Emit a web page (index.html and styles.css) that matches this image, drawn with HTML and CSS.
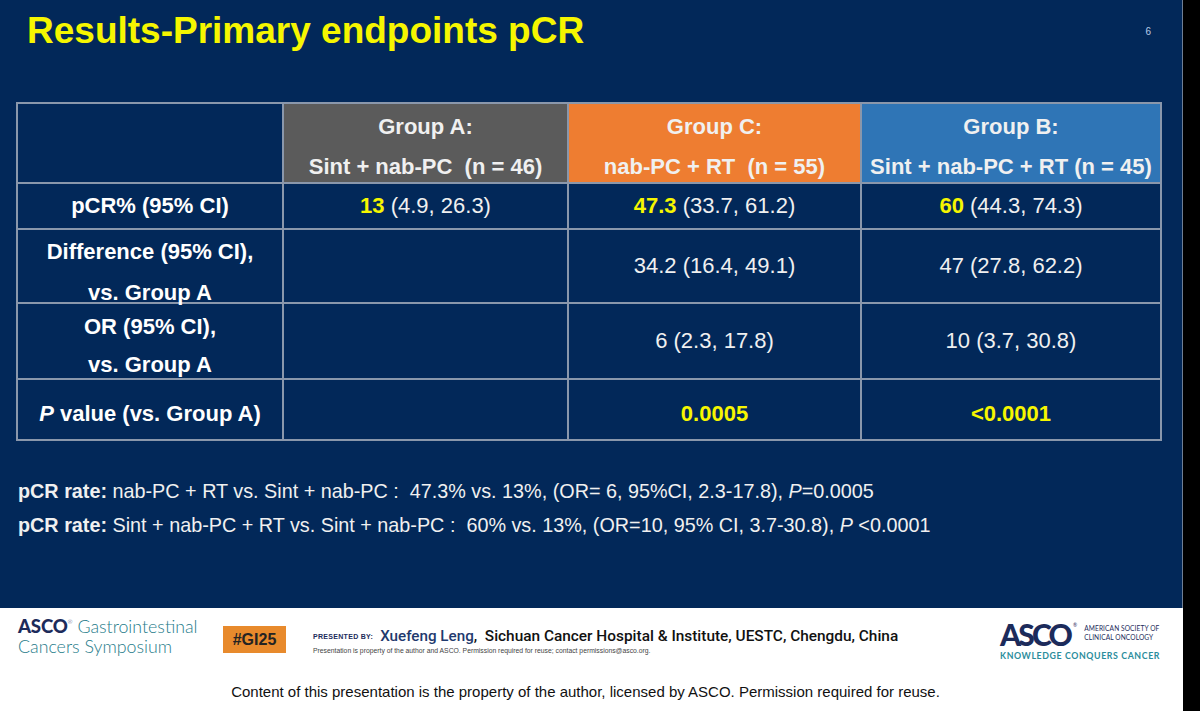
FILE: index.html
```html
<!DOCTYPE html>
<html lang="en">
<head>
<meta charset="utf-8">
<title>Results-Primary endpoints pCR</title>
<link rel="stylesheet" href="styles.css">
</head>
<body>
<div class="screen">
  <div class="page">
    <section class="slide">
      <header class="title-row">
        <h1 class="title">Results-Primary endpoints pCR</h1>
        <span class="page-num">6</span>
      </header>
      <table class="results">
        <colgroup>
          <col class="c1"><col class="c2"><col class="c3"><col class="c4">
        </colgroup>
        <tr class="r-head">
          <th class="blank"></th>
          <th class="grp-a"><div class="hd">Group A:<br>Sint + nab-PC&nbsp; (n = 46)</div></th>
          <th class="grp-c"><div class="hd">Group C:<br>nab-PC + RT&nbsp; (n = 55)</div></th>
          <th class="grp-b"><div class="hd">Group B:<br>Sint + nab-PC + RT (n = 45)</div></th>
        </tr>
        <tr class="r-pcr">
          <td class="lbl">pCR% (95% CI)</td>
          <td><b class="hl">13</b> (4.9, 26.3)</td>
          <td><b class="hl">47.3</b> (33.7, 61.2)</td>
          <td><b class="hl">60</b> (44.3, 74.3)</td>
        </tr>
        <tr class="r-diff">
          <td class="lbl top"><div class="two diff">Difference (95% CI),<br>vs. Group A</div></td>
          <td></td>
          <td>34.2 (16.4, 49.1)</td>
          <td>47 (27.8, 62.2)</td>
        </tr>
        <tr class="r-or">
          <td class="lbl top"><div class="two or">OR (95% CI),<br>vs. Group A</div></td>
          <td></td>
          <td>6 (2.3, 17.8)</td>
          <td>10 (3.7, 30.8)</td>
        </tr>
        <tr class="r-p">
          <td class="lbl"><i>P</i> value (vs. Group A)</td>
          <td></td>
          <td><b class="hl">0.0005</b></td>
          <td><b class="hl">&lt;0.0001</b></td>
        </tr>
      </table>
      <div class="summary">
        <p><b>pCR rate:</b> nab-PC + RT vs. Sint + nab-PC :&nbsp; 47.3% vs. 13%, (OR= 6, 95%CI, 2.3-17.8), <i>P</i>=0.0005</p>
        <p><b>pCR rate:</b> Sint + nab-PC + RT vs. Sint + nab-PC :&nbsp; 60% vs. 13%, (OR=10, 95% CI, 3.7-30.8), <i>P</i> &lt;0.0001</p>
      </div>
    </section>
    <footer class="footer">
      <div class="gi-logo">
        <div class="gi-line"><span class="asco-b">ASCO</span><sup class="reg">®</sup> Gastrointestinal</div>
        <div class="gi-line">Cancers Symposium</div>
      </div>
      <div class="tag">#GI25</div>
      <div class="presenter">
        <div class="pres-line"><span class="pres-by">PRESENTED BY:</span><span class="pres-name">Xuefeng Leng</span><span class="pres-inst">,&nbsp; Sichuan Cancer Hospital &amp; Institute, UESTC, Chengdu, China</span></div>
        <div class="pres-note">Presentation is property of the author and ASCO. Permission required for reuse; contact permissions@asco.org.</div>
      </div>
      <div class="asco-logo">
        <div class="asco-top">
          <span class="asco-big">ASCO</span><sup class="reg2">®</sup>
          <span class="asco-sub">AMERICAN SOCIETY OF<br>CLINICAL ONCOLOGY</span>
        </div>
        <div class="asco-tag">KNOWLEDGE CONQUERS CANCER</div>
      </div>
    </footer>
    <div class="notice">Content of this presentation is the property of the author, licensed by ASCO. Permission required for reuse.</div>
  </div>
  <div class="side"></div>
</div>
</body>
</html>
```
FILE: styles.css
```css
* { box-sizing: border-box; }
html, body { margin: 0; padding: 0; background: #000; }
body { font-family: "Liberation Sans", Arial, sans-serif; }

.screen { display: flex; width: 1200px; height: 711px; overflow: hidden; }
.page { width: 1183px; display: flex; flex-direction: column; background: #fff; }
.side { flex: 1; background: #000; }

.slide {
  height: 608px;
  background: #022859;
  border-right: 1px solid #6f7f95;
  padding: 11px 0 0 0;
}

.title-row { display: flex; justify-content: space-between; align-items: flex-start; padding: 0 31px 0 27px; }
.title {
  margin: 0;
  font-size: 37px;
  line-height: 40px;
  font-weight: bold;
  color: #f6f600;
}
.page-num { font-size: 10px; color: #b9cbe8; margin-top: 15px; }

.results {
  margin: 51px 0 0 16px;
  border-collapse: collapse;
  table-layout: fixed;
  width: 1144px;
  color: #f0f0f0;
  font-size: 22px;
}
.results col.c1 { width: 266px; }
.results col.c2 { width: 285px; }
.results col.c3 { width: 293px; }
.results col.c4 { width: 300px; }
.results th, .results td {
  border: 2px solid #8a97ab;
  padding: 0;
  text-align: center;
  vertical-align: middle;
}
.results th { font-weight: bold; color: #f0f0f0; vertical-align: top; }
.hd { line-height: 40px; margin: 3px 0 -7px; }
.results .grp-a { background: #5b5b5b; }
.results .grp-c { background: #ee7d31; }
.results .grp-b { background: #2f75b6; }
.r-head { height: 80px; }
.r-pcr { height: 46px; }
.r-diff { height: 74px; }
.r-or { height: 76px; }
.r-p { height: 61px; }
.results td.lbl { font-weight: bold; color: #fff; }
.results td.top { vertical-align: top; }
.two.diff { line-height: 41px; margin: 1px 0 -12px; }
.two.or { line-height: 38px; margin: 4px 0 -8px; }
.r-p td { padding-top: 8px; }
.hl { color: #f6f600; font-weight: bold; }

.summary { margin: 33px 0 0 18px; color: #f0f0f0; font-size: 19.8px; }
.summary p { margin: 0; line-height: 34px; white-space: nowrap; }

.footer {
  height: 62px;
  display: flex;
  align-items: flex-start;
  padding: 0 25px 0 18px;
  background: #fff;
}
.gi-logo { width: 205px; margin-top: 8px; font-family: Lato, sans-serif; color: #1f7c8a; font-size: 17.8px; font-weight: 300; line-height: 20px; }
.gi-line { white-space: nowrap; }
.asco-b { color: #1c2b5b; font-weight: 900; font-size: 18.6px; letter-spacing: -0.2px; }
.reg { font-size: 6px; color: #1c2b5b; vertical-align: top; line-height: 1; position: relative; top: 3px; }
.tag {
  width: 63px; height: 27px; margin-top: 18px;
  background: #e88a2c; color: #232323;
  font-weight: bold; font-size: 16px; line-height: 27px; text-align: center;
}
.presenter { margin: 19px 0 0 27px; }
.pres-line { white-space: nowrap; font-family: Roboto, sans-serif; font-weight: 500; font-size: 15.2px; line-height: 18px; color: #111; }
.pres-inst { font-size: 15.4px; }
.pres-by { font-family: "Liberation Sans", sans-serif; font-size: 7px; font-weight: bold; color: #1c2b5b; letter-spacing: 0.3px; margin-right: 7px; vertical-align: 2px; }
.pres-name { color: #1f3a6e; font-size: 15.2px; }
.pres-note { font-size: 6.8px; color: #444; margin-top: 1px; white-space: nowrap; }

.asco-logo { margin: 12px 0 0 auto; width: 158px; font-family: Lato, sans-serif; }
.asco-top { display: flex; align-items: flex-start; height: 28px; }
.asco-big { font-size: 30px; font-weight: 900; color: #1c2b5b; line-height: 28px; letter-spacing: -2.8px; }
.reg2 { font-size: 5px; color: #1c2b5b; line-height: 1; margin: 3px 0 0 3px; }
.asco-sub { font-size: 6.6px; color: #1c2b5b; line-height: 9px; margin: 4px 0 0 7px; letter-spacing: 0.1px; white-space: nowrap; }
.asco-tag { font-size: 8.8px; font-weight: bold; color: #2b8d9c; letter-spacing: 0.6px; margin-top: 2px; white-space: nowrap; }

.notice {
  flex: 1;
  text-align: center;
  font-size: 15px;
  color: #111;
  padding: 13px 12px 0 0;
}
```
